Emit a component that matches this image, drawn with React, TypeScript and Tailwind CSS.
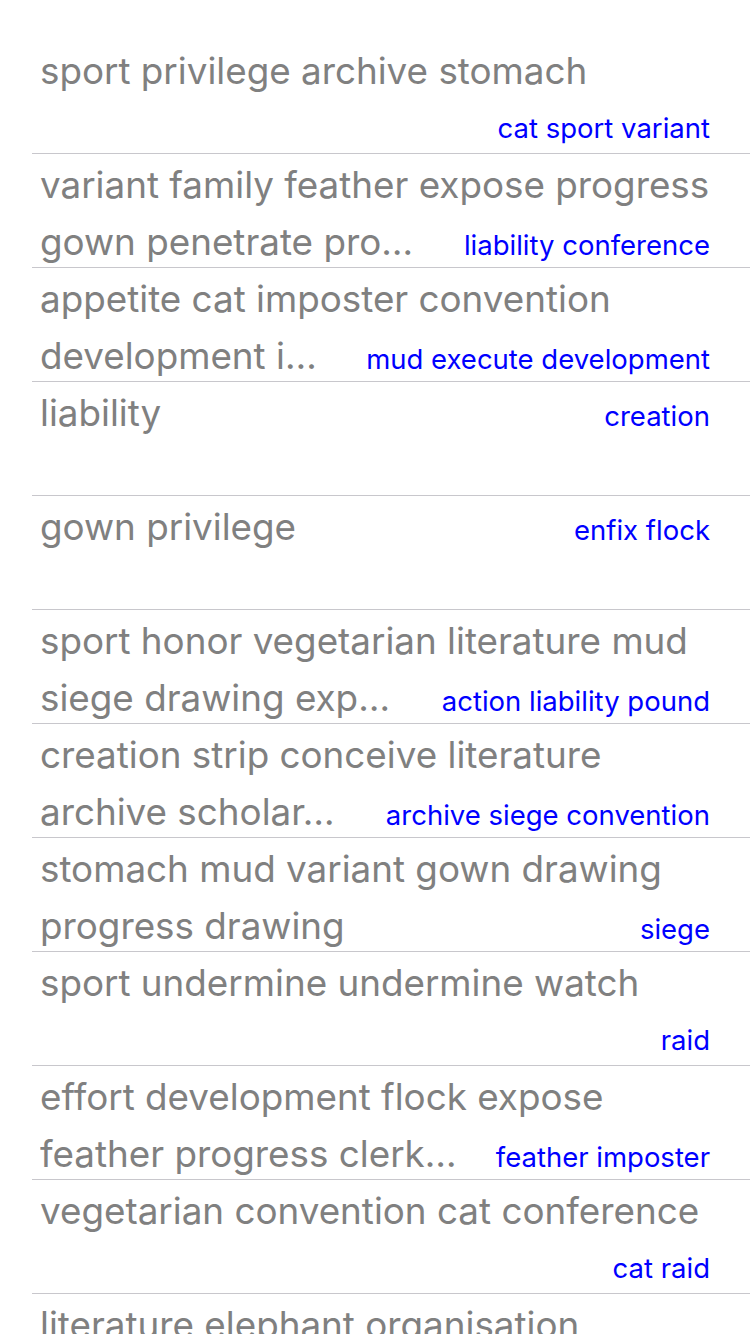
import React from 'react';

type Row = {
  first: string;
  second?: string;
  detail?: string;
  detailLine: 1 | 2;
};

const rows: Row[] = [
  { first: 'sport privilege archive stomach', detail: 'cat sport variant', detailLine: 2 },
  { first: 'variant family feather expose progress', second: 'gown penetrate pro…', detail: 'liability conference', detailLine: 2 },
  { first: 'appetite cat imposter convention', second: 'development i…', detail: 'mud execute development', detailLine: 2 },
  { first: 'liability', detail: 'creation', detailLine: 1 },
  { first: 'gown privilege', detail: 'enfix flock', detailLine: 1 },
  { first: 'sport honor vegetarian literature mud', second: 'siege drawing exp…', detail: 'action liability pound', detailLine: 2 },
  { first: 'creation strip conceive literature', second: 'archive scholar…', detail: 'archive siege convention', detailLine: 2 },
  { first: 'stomach mud variant gown drawing', second: 'progress drawing', detail: 'siege', detailLine: 2 },
  { first: 'sport undermine undermine watch', detail: 'raid', detailLine: 2 },
  { first: 'effort development flock expose', second: 'feather progress clerk…', detail: 'feather imposter', detailLine: 2 },
  { first: 'vegetarian convention cat conference', detail: 'cat raid', detailLine: 2 },
  { first: 'literature elephant organisation', detailLine: 2 },
];

const Detail: React.FC<{ text?: string }> = ({ text }) =>
  text ? <span className="shrink-0 pl-4 text-[27.5px] text-[#0000ff]">{text}</span> : null;

const App: React.FC = () => {
  return (
    <div
      className="h-[1334px] overflow-hidden bg-white pt-[40px]"
      style={{ fontFamily: 'Inter, "Noto Sans", sans-serif' }}
    >
      {rows.map((row, i) => (
        <div key={i} className="ml-[32px] flex h-[114px] flex-col border-b border-[#c8c7cc] pl-2 pr-[40px]">
          <div className="flex h-[57px] items-baseline justify-between pt-[7px] leading-[48px]">
            <span className="whitespace-nowrap text-[36.8px] text-[#808080]">{row.first}</span>
            {row.detailLine === 1 && <Detail text={row.detail} />}
          </div>
          {row.detail && row.detailLine === 2 && (
            <div className="flex h-[56px] items-baseline justify-between pt-[7px] leading-[48px]">
              <span className="min-w-0 truncate text-[36.8px] text-[#808080]">{row.second ?? ''}</span>
              <Detail text={row.detail} />
            </div>
          )}
        </div>
      ))}
    </div>
  );
};

export default App;
